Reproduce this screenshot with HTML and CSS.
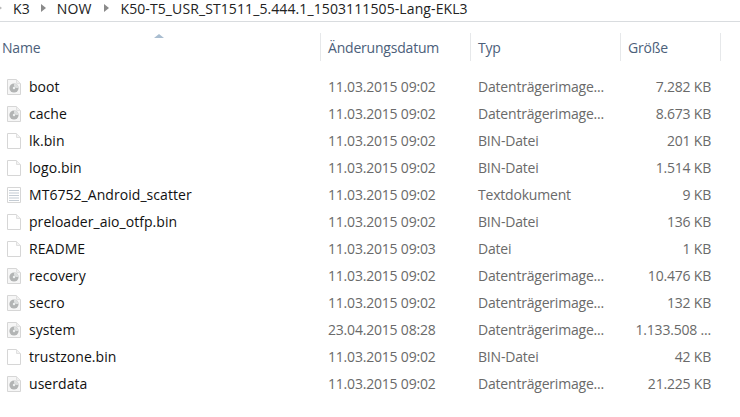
FILE: index.html
```html
<!DOCTYPE html>
<html lang="de">
<head>
<meta charset="utf-8">
<title>K50-T5</title>
<link rel="stylesheet" href="styles.css">
</head>
<body>
<svg class="defs" width="0" height="0" aria-hidden="true">
  <symbol id="blank" viewBox="0 0 18 18">
    <path d="M2.500 1.500H11.500L15.500 5.500V16.500H2.500Z" fill="#fff" stroke="#d6d6d6"/>
    <path d="M11.500 1.500V5.500H15.500" fill="#f2f2f2" stroke="#e0e0e0"/>
  </symbol>
  <symbol id="disc" viewBox="0 0 18 18">
    <path d="M2.500 1.500H11.500L15.500 5.500V16.500H2.500Z" fill="#f6f6f6" stroke="#d6d6d6"/>
    <path d="M11.500 1.500V5.500H15.500" fill="#eee" stroke="#e0e0e0"/>
    <circle cx="9" cy="10" r="4.600" fill="#b2b4b4"/>
    <path d="M9 5.400A4.600 4.600 0 0 1 13.600 10H10.500A1.500 1.500 0 0 0 9 8.500Z" fill="#dcdede"/>
    <circle cx="9" cy="10" r="1.200" fill="#eef0f0"/>
  </symbol>
  <symbol id="text" viewBox="0 0 18 18">
    <path d="M2.500 1.500H15.500V16.500H2.500Z" fill="#fff" stroke="#d6d6d6"/>
    <path d="M4 4.500H14M4 7H14M4 9.500H14M4 12H14M4 14.500H14" stroke="#c4ccd4" stroke-width="1.200"/>
  </symbol>
</svg>
<nav class="crumbs">
  <span class="chev"></span><span>K3</span>
  <span class="chev"></span><span class="now">NOW</span>
  <span class="chev"></span><span>K50-T5_USR_ST1511_5.444.1_1503111505-Lang-EKL3</span>
</nav>
<div class="head">
  <div class="hcell hname">Name<span class="sort"></span></div>
  <div class="hcell">Änderungsdatum</div>
  <div class="hcell">Typ</div>
  <div class="hcell">Größe</div>
</div>
<main class="list">
  <div class="row"><span class="name"><svg class="ico"><use href="#disc"/></svg>boot</span><span class="cell">11.03.2015 09:02</span><span class="cell">Datenträgerimage...</span><span class="cell size">7.282 KB</span></div>
  <div class="row"><span class="name"><svg class="ico"><use href="#disc"/></svg>cache</span><span class="cell">11.03.2015 09:02</span><span class="cell">Datenträgerimage...</span><span class="cell size">8.673 KB</span></div>
  <div class="row"><span class="name"><svg class="ico"><use href="#blank"/></svg>lk.bin</span><span class="cell">11.03.2015 09:02</span><span class="cell">BIN-Datei</span><span class="cell size">201 KB</span></div>
  <div class="row"><span class="name"><svg class="ico"><use href="#blank"/></svg>logo.bin</span><span class="cell">11.03.2015 09:02</span><span class="cell">BIN-Datei</span><span class="cell size">1.514 KB</span></div>
  <div class="row"><span class="name"><svg class="ico"><use href="#text"/></svg>MT6752_Android_scatter</span><span class="cell">11.03.2015 09:02</span><span class="cell">Textdokument</span><span class="cell size">9 KB</span></div>
  <div class="row"><span class="name"><svg class="ico"><use href="#blank"/></svg>preloader_aio_otfp.bin</span><span class="cell">11.03.2015 09:02</span><span class="cell">BIN-Datei</span><span class="cell size">136 KB</span></div>
  <div class="row"><span class="name"><svg class="ico"><use href="#blank"/></svg>README</span><span class="cell">11.03.2015 09:03</span><span class="cell">Datei</span><span class="cell size">1 KB</span></div>
  <div class="row"><span class="name"><svg class="ico"><use href="#disc"/></svg>recovery</span><span class="cell">11.03.2015 09:02</span><span class="cell">Datenträgerimage...</span><span class="cell size">10.476 KB</span></div>
  <div class="row"><span class="name"><svg class="ico"><use href="#disc"/></svg>secro</span><span class="cell">11.03.2015 09:02</span><span class="cell">Datenträgerimage...</span><span class="cell size">132 KB</span></div>
  <div class="row"><span class="name"><svg class="ico"><use href="#disc"/></svg>system</span><span class="cell">23.04.2015 08:28</span><span class="cell">Datenträgerimage...</span><span class="cell size">1.133.508 ...</span></div>
  <div class="row"><span class="name"><svg class="ico"><use href="#blank"/></svg>trustzone.bin</span><span class="cell">11.03.2015 09:02</span><span class="cell">BIN-Datei</span><span class="cell size">42 KB</span></div>
  <div class="row"><span class="name"><svg class="ico"><use href="#disc"/></svg>userdata</span><span class="cell">11.03.2015 09:02</span><span class="cell">Datenträgerimage...</span><span class="cell size">21.225 KB</span></div>
</main>
</body>
</html>
```
FILE: styles.css
```css
* { box-sizing: border-box; }
html, body { margin: 0; height: 100%; overflow: hidden; background: #fff; }
body { font-family: "Open Sans", "Noto Sans", sans-serif; font-size: 14px; color: #1a1a1a; }
.defs { position: absolute; }
.crumbs { height: 22px; display: flex; align-items: center; gap: 11px; padding: 0 0 5px 0; border-bottom: 1px solid #d9dcdf; color: #222; letter-spacing: 0.1px; }
.chev { width: 0; height: 0; border-left: 5px solid #8a8a8a; border-top: 4px solid transparent; border-bottom: 4px solid transparent; }
.chev:first-child { border-left-color: #bbb; margin-left: -3px; }
.now { padding-right: 2px; }
.head { display: grid; grid-template-columns: 321px 150px 150px 100px; height: 29px; margin-top: 10px; padding-top: 1px; color: #4c607a; }
.hcell { border-right: 1px solid #e6e8ea; padding-left: 7px; display: flex; align-items: center; letter-spacing: -0.2px; position: relative; }
.hname { padding-left: 2px; }
.sort { position: absolute; left: 154px; top: 1px; width: 0; height: 0; border-left: 5px solid transparent; border-right: 5px solid transparent; border-bottom: 4px solid #a9bdd0; }
.list { padding-top: 12px; }
.row { display: grid; grid-template-columns: 328px 150px 150px 83px; height: 27px; align-items: center; letter-spacing: -0.2px; }
.name { display: flex; align-items: center; gap: 6px; padding-left: 5px; color: #111; letter-spacing: 0.05px; }
.ico { width: 18px; height: 18px; flex: none; }
.cell { color: #6a6a6a; white-space: nowrap; }
.size { text-align: right; }
```
